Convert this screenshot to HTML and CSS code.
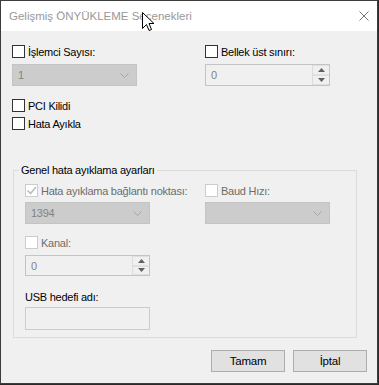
FILE: index.html
```html
<!DOCTYPE html>
<html>
    <head>
        <meta charset="UTF-8" />
        <title>Gelişmiş ÖNYÜKLEME Seçenekleri</title>
        <link rel="stylesheet" href="styles.css">
    </head>
    <body>
        <div class="window">
            <div class="titlebar">
                <span class="title">Gelişmiş ÖNYÜKLEME Seçenekleri</span>
                <svg class="close" width="10" height="10" viewBox="0 0 10 10">
                    <path d="M0.5 0.5 L9.5 9.5 M9.5 0.5 L0.5 9.5" stroke="#777" stroke-width="1" fill="none"/>
                </svg>
                <svg class="cursor" width="13" height="20" viewBox="0 0 13 20">
                    <path d="M0.5 0.5 L0.5 16.5 L4.5 12.5 L7 18.5 L9.5 17.5 L7 11.5 L12 11.5 Z" fill="#fff" stroke="#000" stroke-width="1"/>
                </svg>
            </div>
            <div class="content">
                <div class="cols">
                    <div>
                        <div class="check"><span class="box"></span><span>İşlemci Sayısı:</span></div>
                        <div class="select">
                            <span>1</span>
                            <svg class="chev" width="9" height="5" viewBox="0 0 9 5"><path d="M0.5 0.5 L4.5 4.5 L8.5 0.5" stroke="#a6a6a6" fill="none"/></svg>
                        </div>
                    </div>
                    <div>
                        <div class="check"><span class="box"></span><span>Bellek üst sınırı:</span></div>
                        <div class="spin">
                            <span class="value">0</span>
                            <div class="arrows">
                                <div class="arrow"><svg width="7" height="4" viewBox="0 0 7 4"><path d="M3.5 0 L7 4 L0 4 Z" fill="#606060"/></svg></div>
                                <div class="arrow"><svg width="7" height="4" viewBox="0 0 7 4"><path d="M0 0 L7 0 L3.5 4 Z" fill="#606060"/></svg></div>
                            </div>
                        </div>
                    </div>
                </div>

                <div class="checks">
                    <div class="check"><span class="box"></span><span>PCI Kilidi</span></div>
                    <div class="check"><span class="box"></span><span>Hata Ayıkla</span></div>
                </div>

                <fieldset class="group">
                    <legend>Genel hata ayıklama ayarları</legend>
                    <div class="group-cols">
                        <div>
                            <div class="check off"><span class="box checked">
                                <svg width="11" height="11" viewBox="0 0 11 11"><path d="M1.5 5.5 L4.5 8.5 L10 2" stroke="#bdbdbd" stroke-width="1.6" fill="none"/></svg>
                            </span><span>Hata ayıklama bağlantı noktası:</span></div>
                            <div class="select">
                                <span>1394</span>
                                <svg class="chev" width="9" height="5" viewBox="0 0 9 5"><path d="M0.5 0.5 L4.5 4.5 L8.5 0.5" stroke="#a6a6a6" fill="none"/></svg>
                            </div>
                            <div class="check off kanal"><span class="box"></span><span>Kanal:</span></div>
                            <div class="spin small">
                                <span class="value">0</span>
                                <div class="arrows">
                                    <div class="arrow"><svg width="7" height="4" viewBox="0 0 7 4"><path d="M3.5 0 L7 4 L0 4 Z" fill="#606060"/></svg></div>
                                    <div class="arrow"><svg width="7" height="4" viewBox="0 0 7 4"><path d="M0 0 L7 0 L3.5 4 Z" fill="#606060"/></svg></div>
                                </div>
                            </div>
                            <div class="label">USB hedefi adı:</div>
                            <div class="textbox"></div>
                        </div>
                        <div>
                            <div class="check off"><span class="box"></span><span>Baud Hızı:</span></div>
                            <div class="select">
                                <span></span>
                                <svg class="chev" width="9" height="5" viewBox="0 0 9 5"><path d="M0.5 0.5 L4.5 4.5 L8.5 0.5" stroke="#a6a6a6" fill="none"/></svg>
                            </div>
                        </div>
                    </div>
                </fieldset>

                <div class="buttons">
                    <button>Tamam</button>
                    <button>İptal</button>
                </div>
            </div>
        </div>
    </body>
</html>
```

FILE: styles.css
```css
body {
    margin: 0;
    background: #2a2a2a;
    font-family: "Liberation Sans", Arial, sans-serif;
    font-size: 11px;
    letter-spacing: -0.25px;
    color: #000;
}
.window {
    width: 376px;
    height: 382px;
    border: 1px solid #3c3c3c;
    background: #f0f0f0;
}
.titlebar {
    position: relative;
    height: 30px;
    background: #fff;
    display: flex;
    align-items: center;
    padding-left: 8px;
}
.title {
    font-size: 11.5px;
    letter-spacing: 0;
    color: #999;
}
.close {
    margin-left: auto;
    margin-right: 8px;
}
.cursor {
    position: absolute;
    left: 141px;
    top: 11px;
}
.content {
    padding: 14px 0 0 11px;
}
.cols {
    display: grid;
    grid-template-columns: 125px 125px;
    column-gap: 68px;
}
.check {
    display: flex;
    align-items: center;
    gap: 3px;
    height: 13px;
    white-space: nowrap;
}
.box {
    width: 11px;
    height: 11px;
    border: 1px solid #333;
    background: #fff;
    display: flex;
    align-items: center;
    justify-content: center;
}
.off {
    color: #6d6d6d;
}
.off .box {
    border-color: #cccccc;
}
.select {
    margin-top: 6px;
    height: 22px;
    box-sizing: border-box;
    border: 1px solid #c4c4c4;
    background: #cccccc;
    color: #838383;
    display: flex;
    align-items: center;
    padding: 0 7px 0 5px;
}
.chev {
    margin-left: auto;
}
.spin {
    margin-top: 6px;
    height: 22px;
    box-sizing: border-box;
    border: 1px solid #c4c4c4;
    background: #f0f0f0;
    color: #838383;
    display: flex;
    align-items: stretch;
}
.spin .value {
    padding-left: 5px;
    display: flex;
    align-items: center;
}
.arrows {
    margin-left: auto;
    width: 16px;
    display: flex;
    flex-direction: column;
    border-left: 1px solid #dcdcdc;
}
.arrow {
    flex: 1;
    display: flex;
    align-items: center;
    justify-content: center;
    border: 1px solid #e0e0e0;
    border-left: none;
    border-right: none;
}
.checks {
    margin-top: 13px;
    display: flex;
    flex-direction: column;
    gap: 5px;
}
.group {
    margin: 33px 0 0 1px;
    width: 331px;
    padding: 7px 0 7px 11px;
    border: 1px solid #dcdcdc;
}
.group legend {
    margin-left: -6px;
    padding: 0 2px;
    line-height: 14px;
}
.group-cols {
    display: grid;
    grid-template-columns: 125px 125px;
    column-gap: 55px;
}
.group .select {
    margin-top: 5px;
}
.kanal {
    margin-top: 12px;
}
.spin.small {
    height: 21px;
}
.label {
    margin-top: 14px;
    line-height: 14px;
}
.textbox {
    margin-top: 3px;
    height: 23px;
    box-sizing: border-box;
    border: 1px solid #cccccc;
    background: #f0f0f0;
}
.buttons {
    margin-top: 12px;
    display: flex;
    justify-content: flex-end;
    gap: 8px;
    padding-right: 10px;
}
button {
    width: 74px;
    height: 22px;
    border: 1px solid #adadad;
    background: #e1e1e1;
    font-family: inherit;
    font-size: 11.5px;
    letter-spacing: -0.2px;
    color: #000;
    padding: 0;
}
```
